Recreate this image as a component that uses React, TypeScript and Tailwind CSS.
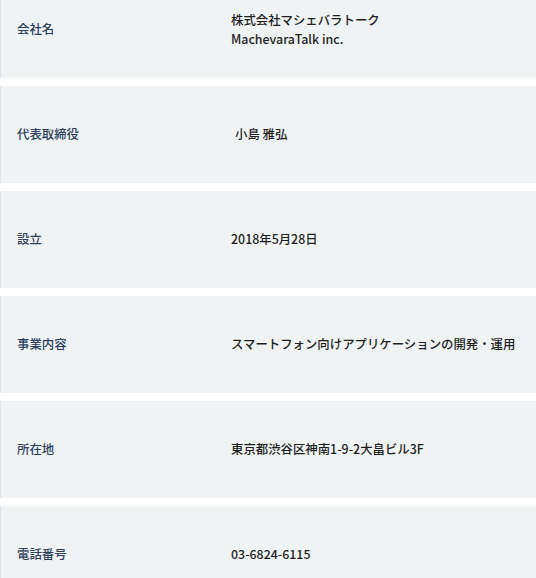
const rows: { label: string; value: string[]; indent?: boolean }[] = [
  { label: '会社名', value: ['株式会社マシェバラトーク', 'MachevaraTalk inc.'] },
  { label: '代表取締役', value: ['小島 雅弘'], indent: true },
  { label: '設立', value: ['2018年5月28日'] },
  { label: '事業内容', value: ['スマートフォン向けアプリケーションの開発・運用'] },
  { label: '所在地', value: ['東京都渋谷区神南1-9-2大畠ビル3F'] },
  { label: '電話番号', value: ['03-6824-6115'] },
];

export default function App() {
  return (
    <div
      className="h-[578px] w-[536px] overflow-hidden bg-white"
      style={{ fontFamily: '"Noto Sans CJK JP", "Noto Sans", sans-serif' }}
    >
      <div className="-mt-[19px] flex flex-col gap-2">
        {rows.map((row) => (
          <div
            key={row.label}
            className="flex h-[97px] shrink-0 items-center border-l border-[#dfe3e6] bg-[#eff3f4]"
          >
            <div className="w-[230px] shrink-0 pl-[16px] text-[12.4px] font-medium text-[#2d3f5c]">
              {row.label}
            </div>
            <div
              className={`text-[12.4px] font-medium leading-[19px] text-[#1f1f1f] ${
                row.indent ? 'pl-[4px]' : ''
              }`}
            >
              {row.value.map((line) => (
                <div key={line}>{line}</div>
              ))}
            </div>
          </div>
        ))}
      </div>
    </div>
  );
}
